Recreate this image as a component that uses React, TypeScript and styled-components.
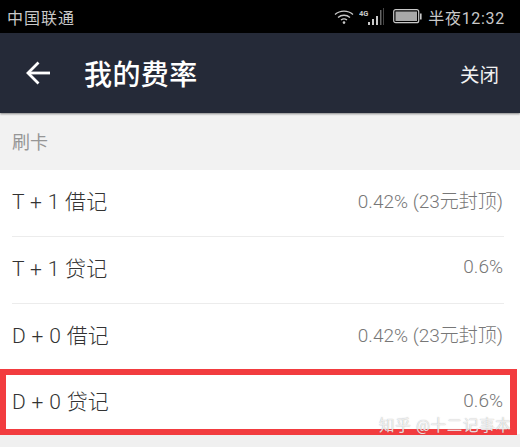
import React from 'react';
import styled, { createGlobalStyle } from 'styled-components';

const Global = createGlobalStyle`
  html, body { margin: 0; padding: 0; background: #f0f0f0; }
  body { width: 520px; height: 447px; overflow: hidden; font-family: "Roboto", "Noto Sans CJK SC", sans-serif; }
`;
const Page = styled.div`position: relative; width: 520px; height: 447px; display: flex; flex-direction: column; background: #f0f0f0;`;
const StatusBar = styled.div`height: 33px; background: #000; display: flex; align-items: center; justify-content: space-between; padding: 0 15px 0 7px; color: #c9c9c9; font-size: 16px;`;
const Carrier = styled.span`letter-spacing: 1px;`;
const StatusRight = styled.div`display: flex; align-items: center;`;
const Clock = styled.span`font-size: 16px; letter-spacing: 0.7px; margin-left: 6px;`;
const NavBar = styled.div`height: 80px; background: #252a38; display: flex; align-items: center; padding: 0 21px 0 25px; color: #fff; box-shadow: 0 1px 2px rgba(0,0,0,.45); position: relative;`;
const Title = styled.h1`margin: 0 0 0 33px; font-size: 28px; font-weight: 500; flex: 1; letter-spacing: 0.4px;`;
const Close = styled.span`font-size: 19.5px; color: #f2f2f2;`;
const Section = styled.div`height: 57px; box-sizing: border-box; padding: 0 0 2px 12px; background: #f2f2f2; display: flex; align-items: center; color: #969696; font-size: 18px;`;
const List = styled.div`background: #fff;`;
const Row = styled.div<{ $last?: boolean }>`
  height: ${p => (p.$last ? 63 : 67)}px; box-sizing: border-box; display: flex; align-items: center; justify-content: space-between;
  margin: 0 16px 0 12px; padding-right: 1px; padding-bottom: ${p => (p.$last ? 5 : 7)}px;
  border-bottom: ${p => (p.$last ? 'none' : '1px solid #ececec')};
`;
const Label = styled.span`font-size: 21px; font-weight: 300; color: #333; letter-spacing: 0.1px; word-spacing: 0.5px;`;
const Value = styled.span`font-size: 19px; font-weight: 300; color: #777;`;
const Highlight = styled.div`position: absolute; left: 0; top: 369px; width: 517px; height: 66px; box-sizing: border-box; border: 6px solid #f23c3f; border-right-width: 7px;`;
const Watermark = styled.div`position: absolute; left: 379px; top: 413px; font-size: 15.5px; color: rgba(255,255,255,.8); text-shadow: 0 0 1px rgba(120,120,120,.7); letter-spacing: 0.7px; white-space: nowrap;`;

const rows = [
  ['T + 1 借记', '0.42% (23元封顶)'],
  ['T + 1 贷记', '0.6%'],
  ['D + 0 借记', '0.42% (23元封顶)'],
  ['D + 0 贷记', '0.6%'],
];

export default function App() {
  return (
    <Page>
      <Global />
      <StatusBar>
        <Carrier>中国联通</Carrier>
        <StatusRight>
          <svg width="20" height="16" viewBox="0 0 20 16" fill="none" stroke="#c9c9c9" strokeWidth="1.3">
            <path d="M1 5.5C6 1 14 1 19 5.5" /><path d="M4 8.5C7.5 5.5 12.5 5.5 16 8.5" /><path d="M7 11C8.8 9.6 11.2 9.6 13 11" />
            <circle cx="10" cy="13.6" r="1.3" fill="#c9c9c9" stroke="none" />
          </svg>
          <svg width="26" height="20" viewBox="0 0 26 20" style={{ marginLeft: 5 }}>
            <rect x="9" y="15" width="2" height="3" fill="#c9c9c9" />
            <rect x="13" y="12" width="2" height="6" fill="#c9c9c9" />
            <rect x="17" y="9" width="2" height="9" fill="#c9c9c9" />
            <rect x="21" y="3" width="1.5" height="15" fill="#666" />
            <rect x="24" y="1" width="1" height="17" fill="#444" />
            <text x="0" y="9" fontSize="7.5" fontWeight="700" fill="#c9c9c9" fontFamily="Roboto, sans-serif">4G</text>
          </svg>
          <svg width="29" height="15" viewBox="0 0 29 15" style={{ marginLeft: 8 }}>
            <rect x="0.7" y="0.7" width="25" height="13" rx="2" fill="none" stroke="#c9c9c9" strokeWidth="1.2" />
            <rect x="2.5" y="2.5" width="21.5" height="9.5" fill="#a9a9a9" />
            <rect x="27" y="4.5" width="1.6" height="6" fill="#c9c9c9" />
          </svg>
          <Clock>半夜12:32</Clock>
        </StatusRight>
      </StatusBar>
      <NavBar>
        <svg width="26" height="24" viewBox="0 0 26 24" fill="none" stroke="#fff" strokeWidth="2.8">
          <path d="M25 12H3" /><path d="M13.5 1.5L3 12L13.5 22.5" />
        </svg>
        <Title>我的费率</Title>
        <Close>关闭</Close>
      </NavBar>
      <Section>刷卡</Section>
      <List>
        {rows.map(([l, v], i) => (
          <Row key={l} $last={i === rows.length - 1}>
            <Label>{l}</Label>
            <Value>{v}</Value>
          </Row>
        ))}
      </List>
      <Highlight />
      <Watermark>知乎 @十二记事本</Watermark>
    </Page>
  );
}
